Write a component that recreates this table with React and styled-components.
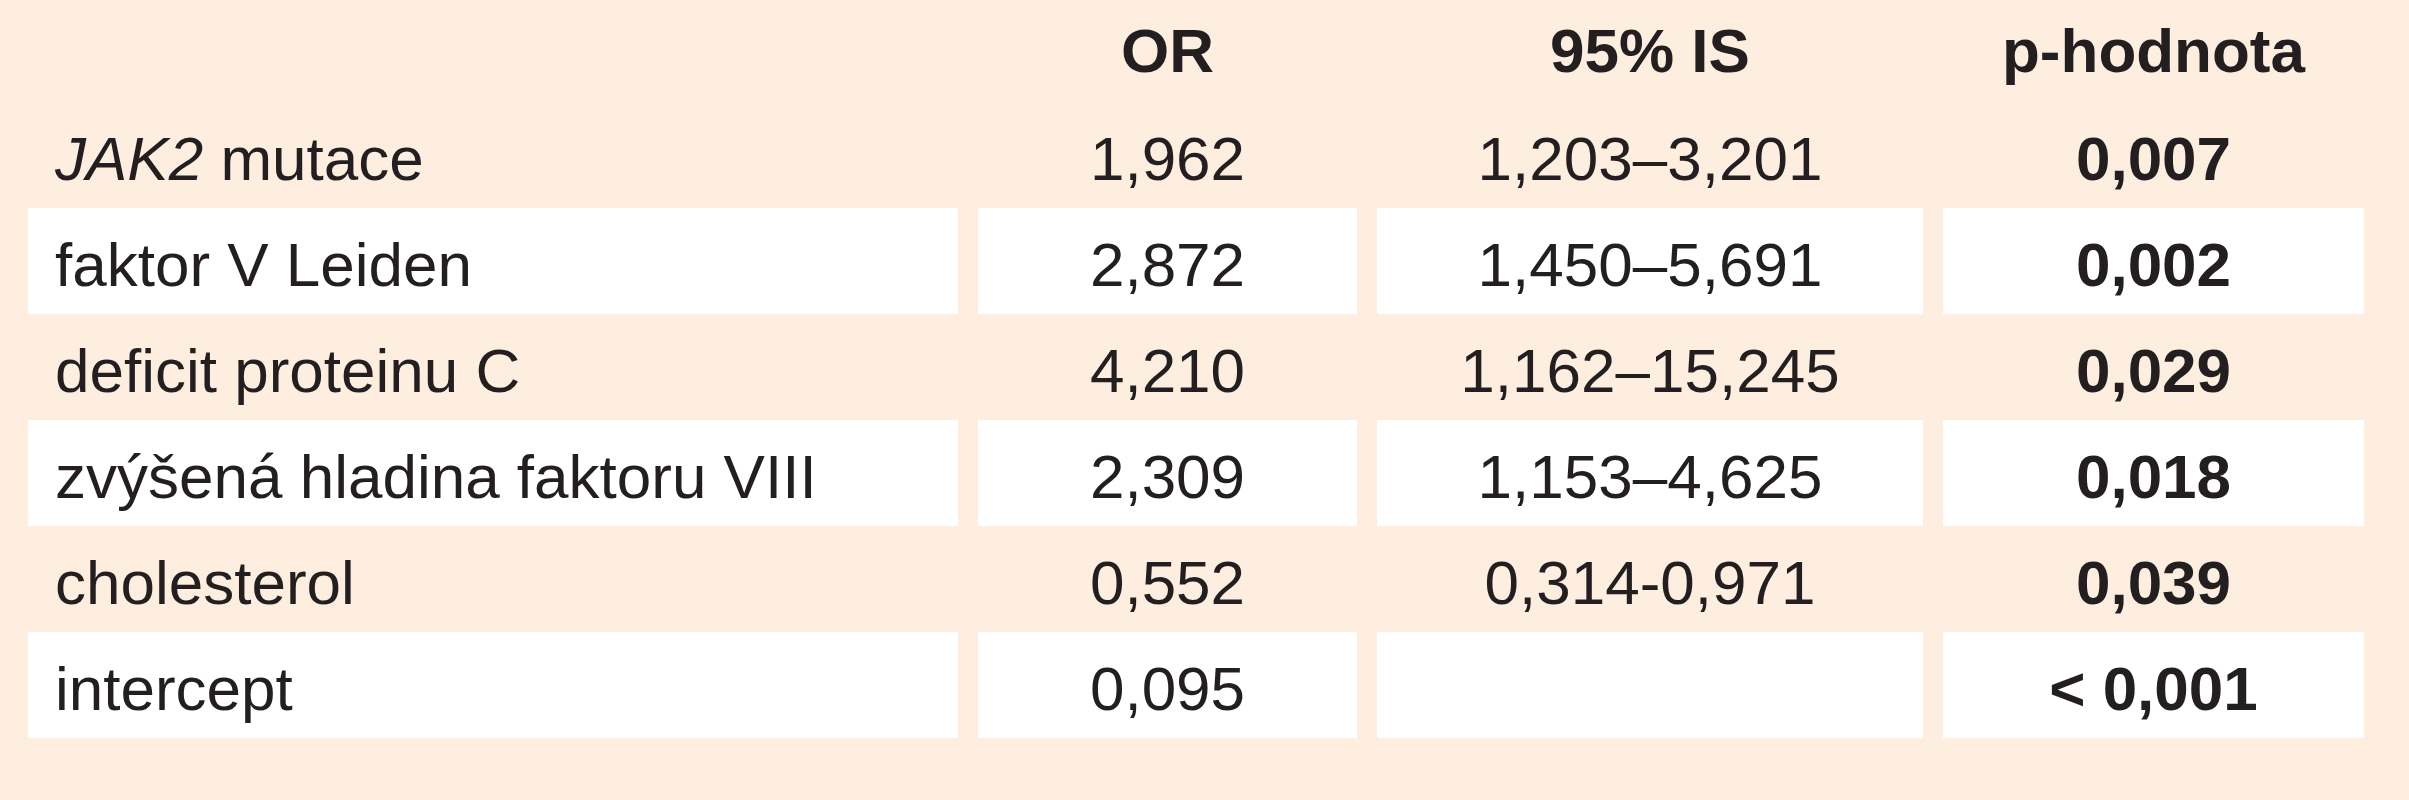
import React from "react";
import styled, { createGlobalStyle } from "styled-components";

const Global = createGlobalStyle`
  html, body { margin: 0; padding: 0; background: #fdeedf; }
  body { font-family: "Liberation Sans", Arial, sans-serif; color: #231f20; }
`;

const Page = styled.div`
  width: 2409px;
  height: 800px;
  box-sizing: border-box;
  background: #fdeedf;
  padding: 0 0 0 28px;
`;

const Table = styled.div`
  display: flex;
  flex-direction: column;
`;

const Row = styled.div`
  display: grid;
  grid-template-columns: 930px 379px 546px 421px;
  column-gap: 20px;
  height: ${(p) => (p.$header ? "102px" : "106px")};
`;

const Cell = styled.div`
  box-sizing: border-box;
  font-size: 62px;
  white-space: nowrap;
  background: ${(p) => (p.$white ? "#ffffff" : "transparent")};
  font-weight: ${(p) => (p.$bold ? 700 : 400)};
  text-align: ${(p) => (p.$left ? "left" : "center")};
  padding-left: ${(p) => (p.$left ? "27px" : "0")};
  padding-top: ${(p) => (p.$header ? "0" : "7px")};
  line-height: ${(p) => (p.$header ? "102px" : "99px")};
`;

const Gene = styled.i`
  font-style: italic;
`;

const rows = [
  { label: <><Gene>JAK2</Gene> mutace</>, or: "1,962", ci: "1,203–3,201", p: "0,007" },
  { label: "faktor V Leiden", or: "2,872", ci: "1,450–5,691", p: "0,002" },
  { label: "deficit proteinu C", or: "4,210", ci: "1,162–15,245", p: "0,029" },
  { label: "zvýšená hladina faktoru VIII", or: "2,309", ci: "1,153–4,625", p: "0,018" },
  { label: "cholesterol", or: "0,552", ci: "0,314-0,971", p: "0,039" },
  { label: "intercept", or: "0,095", ci: "", p: "< 0,001" },
];

export default function App() {
  return (
    <>
      <Global />
      <Page>
        <Table>
          <Row $header>
            <Cell $header $left />
            <Cell $header $bold>OR</Cell>
            <Cell $header $bold>95% IS</Cell>
            <Cell $header $bold>p-hodnota</Cell>
          </Row>
          {rows.map((r, i) => {
            const white = i % 2 === 1;
            return (
              <Row key={i}>
                <Cell $left $white={white}>{r.label}</Cell>
                <Cell $white={white}>{r.or}</Cell>
                <Cell $white={white}>{r.ci}</Cell>
                <Cell $white={white} $bold>{r.p}</Cell>
              </Row>
            );
          })}
        </Table>
      </Page>
    </>
  );
}
